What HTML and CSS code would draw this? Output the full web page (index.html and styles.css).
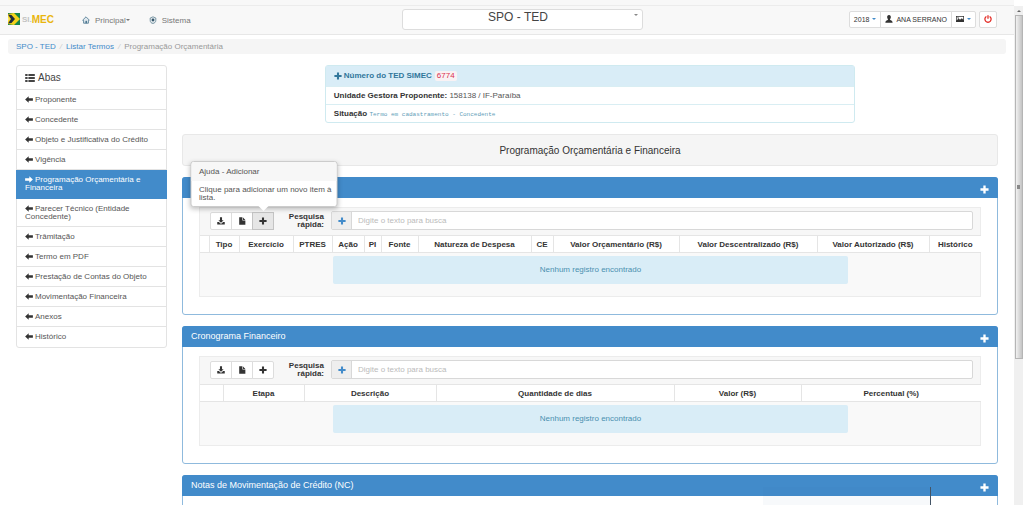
FILE: index.html
```html
<!DOCTYPE html>
<html lang="pt-BR">
<head>
<meta charset="utf-8">
<title>SIMEC - SPO - TED</title>
<link rel="stylesheet" href="styles.css">
</head>
<body>
<svg class="sprite" aria-hidden="true">
  <symbol id="plus" viewBox="0 0 10 10"><path d="M3.700.5h2.600v3.200h3.200v2.600H6.300v3.200H3.700V6.300H.5V3.700h3.200z"/></symbol>
  <symbol id="left" viewBox="0 0 10 9"><path d="M0 4.500L4.600.2v2.700H10v3.200H4.600v2.700z"/></symbol>
  <symbol id="right" viewBox="0 0 10 9"><path d="M10 4.500L5.400.2v2.700H0v3.200h5.400v2.700z"/></symbol>
  <symbol id="list" viewBox="0 0 12 10"><path d="M0 0h3v2.600H0zM4 0h8v2.600H4zM0 3.700h3v2.600H0zM4 3.700h8v2.600H4zM0 7.400h3V10H0zM4 7.400h8V10H4z"/></symbol>
  <symbol id="download" viewBox="0 0 10 10"><path d="M3.700.3h2.600v3.700h2L5 7.200 1.700 4h2zM.3 6.400h2.200L4 8h2l1.500-1.600h2.200v3.100H.3z"/></symbol>
  <symbol id="file" viewBox="0 0 10 10"><path d="M1.500.3h4v4.200h3.700v5.200H1.500zM6.300.5l2.900 3.200H6.300z"/></symbol>
  <symbol id="user" viewBox="0 0 10 10"><path d="M5 0c1.700 0 2.500 1.200 2.300 2.900C7.200 4.200 6.500 5 6.200 5.600c0 1 3.300 1 3.300 4.100H.5c0-3.100 3.300-3.100 3.300-4.100C3.500 5 2.800 4.200 2.700 2.900 2.500 1.200 3.300 0 5 0z"/></symbol>
  <symbol id="picture" viewBox="0 0 11 10"><path fill-rule="evenodd" d="M0 1h11v8H0zM1 2v5l2.500-3 2 2L8 4l2 2V2zM2 2.500h1.500V4H2z"/></symbol>
  <symbol id="power" viewBox="0 0 10 10"><path fill="none" stroke="currentColor" stroke-width="1.600" d="M3 1.800a3.900 3.900 0 1 0 4 0M5 .3v4.500"/></symbol>
</svg>
<div class="page">
  <header class="topbar">
    <a class="logo" href="#" aria-label="SIMEC">
      <svg class="flag" viewBox="0 0 12 12" aria-hidden="true"><path fill="#16854b" d="M0 0h12v12H0z"/><path fill="#f3d21b" d="M0 1l6-1 6 6-6 6-6-1z"/><path fill="#1d2a3d" d="M0 1.500l3.500.5L7 6l-3.500 4-3.500.5L3 6z"/><path fill="#f9e46b" d="M0 4l2 2-2 2z"/></svg>
      <span class="logo-si">SI.</span><span class="logo-mec">MEC</span>
    </a>
    <nav class="menu">
      <a href="#"><svg viewBox="0 0 10 10" aria-hidden="true"><path fill="#dfe8ee" stroke="#47738d" d="M2 5v4h6V5M.5 5.500L5 1l4.500 4.500"/><path fill="#47738d" d="M4.300 6h1.900v3H4.300z"/></svg>Principal<i class="caret"></i></a>
      <a href="#"><svg viewBox="0 0 10 10" aria-hidden="true"><path fill="#e6ecef" stroke="#5f8193" d="M1.500 2.500L5 1l3.500 1.500v3C8.500 8 6.500 9 5 9.300 3 9 1.500 8 1.500 5.500z"/><circle cx="5" cy="5" r="1.800" fill="#35566b"/></svg>Sistema</a>
    </nav>
    <div class="module">
      <select aria-label="Módulo"><option>SPO - TED</option></select>
      <i class="caret"></i>
    </div>
    <div class="account">
      <div class="group">
        <button type="button">2018 <i class="caret blue"></i></button>
        <button type="button"><svg><use href="#user"/></svg>ANA SERRANO</button>
        <button type="button" aria-label="Tema"><svg><use href="#picture"/></svg><i class="caret blue"></i></button>
      </div>
      <div class="group"><button type="button" class="logout" aria-label="Sair"><svg><use href="#power"/></svg></button></div>
    </div>
  </header>

  <nav class="breadcrumb" aria-label="Trilha"><a href="#">SPO - TED</a><i>/</i><a href="#">Listar Termos</a><i>/</i><span>Programação Orçamentária</span></nav>

  <div class="columns">
    <aside class="tabs">
      <h2><svg><use href="#list"/></svg>Abas</h2>
      <a href="#"><svg><use href="#left"/></svg>Proponente</a>
      <a href="#"><svg><use href="#left"/></svg>Concedente</a>
      <a href="#"><svg><use href="#left"/></svg>Objeto e Justificativa do Crédito</a>
      <a href="#"><svg><use href="#left"/></svg>Vigência</a>
      <a href="#" class="active" aria-current="page"><svg><use href="#right"/></svg>Programação Orçamentária e Financeira</a>
      <a href="#"><svg><use href="#left"/></svg>Parecer Técnico (Entidade Concedente)</a>
      <a href="#"><svg><use href="#left"/></svg>Trâmitação</a>
      <a href="#"><svg><use href="#left"/></svg>Termo em PDF</a>
      <a href="#"><svg><use href="#left"/></svg>Prestação de Contas do Objeto</a>
      <a href="#"><svg><use href="#left"/></svg>Movimentação Financeira</a>
      <a href="#"><svg><use href="#left"/></svg>Anexos</a>
      <a href="#"><svg><use href="#left"/></svg>Histórico</a>
    </aside>

    <main>
      <section class="info">
        <h3><svg><use href="#plus"/></svg>Número do TED SIMEC <code>6774</code></h3>
        <p><b>Unidade Gestora Proponente:</b> 158138 / IF-Paraíba</p>
        <p><b>Situação</b> <samp>Termo em cadastramento - Concedente</samp></p>
      </section>

      <h1>Programação Orçamentária e Financeira</h1>

      <section class="panel">
        <header><h2></h2><button type="button" aria-label="Expandir"><svg><use href="#plus"/></svg></button></header>
        <div class="listing">
          <div class="filter">
            <div class="group">
              <button type="button" aria-label="Baixar"><svg><use href="#download"/></svg></button>
              <button type="button" aria-label="Arquivo"><svg><use href="#file"/></svg></button>
              <div class="help-anchor">
                <button type="button" class="pressed" aria-label="Adicionar" aria-describedby="help"><svg><use href="#plus"/></svg></button>
                <div class="popover" role="tooltip" id="help"><h4>Ajuda - Adicionar</h4><p>Clique para adicionar um novo item à lista.</p></div>
              </div>
            </div>
            <label for="busca1">Pesquisa rápida:</label>
            <div class="search"><span><svg><use href="#plus"/></svg></span><input id="busca1" type="text" placeholder="Digite o texto para busca"></div>
          </div>
          <table>
            <colgroup><col class="w9"><col class="w30"><col class="w54"><col class="w39"><col class="w32"><col class="w17"><col class="w37"><col class="w113"><col class="w22"><col class="w126"><col class="w138"><col class="w112"><col class="w52"></colgroup>
            <thead><tr><th></th><th>Tipo</th><th>Exercício</th><th>PTRES</th><th>Ação</th><th>PI</th><th>Fonte</th><th>Natureza de Despesa</th><th>CE</th><th>Valor Orçamentário (R$)</th><th>Valor Descentralizado (R$)</th><th>Valor Autorizado (R$)</th><th>Histórico</th></tr></thead>
            <tbody><tr><td colspan="13"><div class="empty">Nenhum registro encontrado</div></td></tr></tbody>
          </table>
        </div>
      </section>

      <section class="panel">
        <header><h2>Cronograma Financeiro</h2><button type="button" aria-label="Expandir"><svg><use href="#plus"/></svg></button></header>
        <div class="listing">
          <div class="filter">
            <div class="group">
              <button type="button" aria-label="Baixar"><svg><use href="#download"/></svg></button>
              <button type="button" aria-label="Arquivo"><svg><use href="#file"/></svg></button>
              <button type="button" aria-label="Adicionar"><svg><use href="#plus"/></svg></button>
            </div>
            <label for="busca2">Pesquisa rápida:</label>
            <div class="search"><span><svg><use href="#plus"/></svg></span><input id="busca2" type="text" placeholder="Digite o texto para busca"></div>
          </div>
          <table>
            <colgroup><col class="w23"><col class="w81"><col class="w132"><col class="w238"><col class="w127"><col class="w180"></colgroup>
            <thead><tr><th></th><th>Etapa</th><th>Descrição</th><th>Quantidade de dias</th><th>Valor (R$)</th><th>Percentual (%)</th></tr></thead>
            <tbody><tr><td colspan="6"><div class="empty">Nenhum registro encontrado</div></td></tr></tbody>
          </table>
        </div>
      </section>

      <section class="panel">
        <header><h2>Notas de Movimentação de Crédito (NC)</h2><button type="button" aria-label="Expandir"><svg><use href="#plus"/></svg></button></header>
        <div class="listing"><div class="filter"></div></div>
      </section>
    </main>
  </div>
</div>
<div class="scrollbar" aria-hidden="true"><i class="arrow"></i><div class="thumb"><i></i></div></div>
<div class="toast" aria-hidden="true"></div>
</body>
</html>
```
FILE: styles.css
```css
* { box-sizing: border-box; }

body {
  margin: 0;
  height: 100vh;
  display: flex;
  overflow: hidden;
  background: #fff;
  color: #555;
  font: 8px/9px "Liberation Sans", Arial, sans-serif;
}

h1, h2, h3, h4, p { margin: 0; font-size: inherit; font-weight: normal; }
a { color: #428bca; text-decoration: none; }
button, input, select { font: inherit; color: inherit; margin: 0; padding: 0; }
svg { width: 8px; height: 8px; fill: currentColor; flex: none; }
.sprite { position: absolute; width: 0; height: 0; }

.page { flex: 1; min-width: 0; }

.caret {
  display: inline-block;
  border: 2px solid transparent;
  border-top-color: currentColor;
  border-bottom: 0;
  vertical-align: middle;
}
.caret.blue { border-top-color: #428bca; }

/* Top bar */
.topbar {
  display: grid;
  grid-template-areas: "brand module account";
  grid-template-columns: 394fr 241px 354fr;
  align-items: center;
  height: 35px;
  padding: 6px 17px 2px 8px;
  background: linear-gradient(#f8f8f8 5px, #ececec 5px, #ececec 6px, #f8f8f8 6px);
  border-bottom: 1px solid #e7e7e7;
}
.logo { grid-area: brand; display: flex; align-items: center; font-size: 10px; font-weight: bold; }
.flag { width: 12px; height: 12px; margin-right: 2px; }
.logo-si { color: #c3c3c3; font-size: 8px; }
.logo-mec { color: #e9b50e; }
.menu { grid-area: brand; display: flex; gap: 19px; padding: 2px 0 0 74px; justify-self: start; }
.menu a { display: flex; align-items: center; color: #777; }
.menu svg { margin-right: 5px; }
.module { grid-area: module; position: relative; }
.module select {
  display: block;
  width: 100%;
  height: 21px;
  padding: 0 9px 3px 0;
  border: 1px solid #ddd;
  border-radius: 3px;
  background: #fff;
  color: #444;
  font-size: 12px;
  line-height: 15px;
  text-align-last: center;
  appearance: none;
}
.module .caret { position: absolute; top: 5px; right: 5px; color: #888; }
.account { grid-area: account; display: flex; justify-content: flex-end; gap: 4px; font-size: 7px; }

.group { display: flex; }
.group button {
  display: flex;
  align-items: center;
  justify-content: center;
  gap: 4px;
  height: 17px;
  padding: 0 5px;
  border: 1px solid #ddd;
  margin-left: -1px;
  background: #fff;
  color: #333;
  white-space: nowrap;
}
.account .group button { padding: 0 4px; gap: 3px; }
.group > :first-child { border-radius: 2px 0 0 2px; }
.group > :last-child { border-radius: 0 2px 2px 0; }
.group .logout { color: #e32b25; border-radius: 2px; }

.breadcrumb {
  margin: 4px 8px 11px;
  padding: 3px 8px;
  background: #f5f5f5;
  border-radius: 3px;
  color: #999;
}
.breadcrumb i { color: #ccc; padding: 0 4px; }

.columns {
  display: grid;
  grid-template-columns: 151px minmax(0, 1fr);
  gap: 15px;
  align-items: start;
  padding: 0 16px;
}

/* Side tabs */
.tabs { border: 1px solid #e3e3e3; border-radius: 3px; line-height: 8px; }
.tabs h2, .tabs a { display: block; padding: 6px 8px 5px; border-bottom: 1px solid #e3e3e3; }
.tabs h2 { display: flex; align-items: center; gap: 3px; font-size: 10px; line-height: 12px; color: #444; }
.tabs h2 svg { width: 10px; }
.tabs a { color: #555; }
.tabs a:last-child { border-bottom: 0; padding-bottom: 6px; }
.tabs a svg { height: 7px; margin-right: 2px; vertical-align: -1px; }
.tabs a:not(.active) svg { color: #333; }
.tabs .active { background: #428bca; color: #fff; border-color: #428bca; margin: 0 -1px; padding: 6px 9px; }

/* Term summary */
.info { width: 65%; margin: 0 auto 11px; border: 1px solid #cfeaf0; border-radius: 3px; }
.info h3 { display: flex; align-items: center; padding: 5px 8px; background: #d9edf7; color: #31779b; font-weight: bold; line-height: 10px; }
.info h3 svg { margin-right: 2px; }
.info code { margin-left: 3px; padding: 0 2px; background: #f9f2f4; color: #d9304f; border-radius: 2px; font: 8px/10px "Liberation Sans", Arial, sans-serif; }
.info p { padding: 4px 8px; border-top: 1px solid #d9eef3; }
.info b { color: #333; }
.info samp { color: #5f9db8; font: 6px/6px "Liberation Mono", "Courier New", monospace; }

h1 {
  padding: 10px 10px 9px;
  margin-bottom: 11px;
  border: 1px solid #e8e8e8;
  border-radius: 3px;
  background: #f5f5f5;
  color: #333;
  font-size: 10px;
  line-height: 11px;
  text-align: center;
}

/* Panels */
.panel { border: 1px solid #8fbadd; border-radius: 3px; margin-bottom: 11px; padding-bottom: 17px; }
.panel > header {
  display: flex;
  justify-content: space-between;
  align-items: center;
  height: 21px;
  margin: -1px -1px 9px;
  padding: 0 9px;
  border-radius: 3px 3px 0 0;
  background: #428bca;
  color: #fff;
}
.panel h2 { font-size: 9px; line-height: 11px; }
.panel > header button { display: flex; border: 0; background: none; padding-top: 3px; }
.panel > header svg { width: 9px; height: 9px; }
.listing { margin: 0 16px; border: 1px solid #ececec; background: #f9f9f9; }
.filter { display: flex; align-items: center; min-height: 27px; padding: 0 7px 2px 11px; background: #f7f7f7; }
.filter .group button { width: 22px; height: 18px; padding: 0; }
.filter .group .pressed { background: #e6e6e6; border-color: #c4c4c4; }
.filter label { width: 50px; margin-right: 7px; color: #333; font-weight: bold; line-height: 8px; text-align: right; padding-left: 10px; }
.search { flex: 1; display: flex; height: 19px; border: 1px solid #d8d8d8; border-radius: 2px; background: #fff; }
.search span { display: flex; align-items: center; justify-content: center; width: 20px; background: #eee; border-right: 1px solid #d8d8d8; color: #428bca; }
.search input { flex: 1; min-width: 0; border: 0; background: none; padding: 0 6px; }
.search input::placeholder { color: #bbb; opacity: 1; }

table { width: 100%; table-layout: fixed; border-collapse: collapse; }
th { height: 17px; padding: 0; background: #fff; color: #333; border: solid #e5e5e5; border-width: 1px 0 1px 1px; white-space: nowrap; }
th:first-child { border-left: 0; }
td { padding: 3px 0 12px; }
.empty { width: 66%; margin: 0 auto; padding: 9px; line-height: 10px; border-radius: 2px; background: #d9edf7; color: #4a90b0; text-align: center; }

.w9 { width: 9px; } .w17 { width: 17px; } .w22 { width: 22px; } .w23 { width: 23px; }
.w30 { width: 30px; } .w32 { width: 32px; } .w37 { width: 37px; } .w39 { width: 39px; }
.w52 { width: 52px; } .w54 { width: 54px; } .w81 { width: 81px; } .w112 { width: 112px; }
.w113 { width: 113px; } .w126 { width: 126px; } .w127 { width: 127px; } .w132 { width: 132px; }
.w138 { width: 138px; } .w180 { width: 180px; } .w238 { width: 238px; }

/* Help bubble over the add button */
.help-anchor { position: relative; }
.popover {
  position: absolute;
  z-index: 2;
  bottom: calc(100% + 5px);
  left: 50%;
  width: 147px;
  transform: translateX(-50%);
  border: 1px solid #ccc;
  border-radius: 3px;
  background: #fff;
  box-shadow: 0 2px 5px rgba(0, 0, 0, .25);
}
.popover h4 { padding: 5px 8px; background: #f7f7f7; border-radius: 3px 3px 0 0; }
.popover p { padding: 5px 0 4px 8px; line-height: 8px; }
.popover::after {
  content: "";
  position: absolute;
  top: 100%;
  left: 50%;
  margin-left: -5px;
  border: 5px solid transparent;
  border-top-color: #fff;
  border-bottom: 0;
}

/* Scroll track */
.scrollbar { width: 9px; margin-top: 6px; background: #f0f0f0; display: flex; flex-direction: column; align-items: center; }
.arrow { margin: 4px 0 3px; border: 2px solid transparent; border-bottom-color: #666; border-top: 0; }
.thumb { display: flex; align-items: center; justify-content: center; width: 8px; height: 69%; border: 1px solid #b5b5b5; background: linear-gradient(90deg, #f1f1f1, #c4c4c4); }
.thumb i { width: 3px; height: 4px; background: #888; }

.toast { position: fixed; right: 92px; bottom: 0; width: 168px; height: 18px; background: rgba(60, 110, 160, .04); border-right: 1px solid #456; }
```
